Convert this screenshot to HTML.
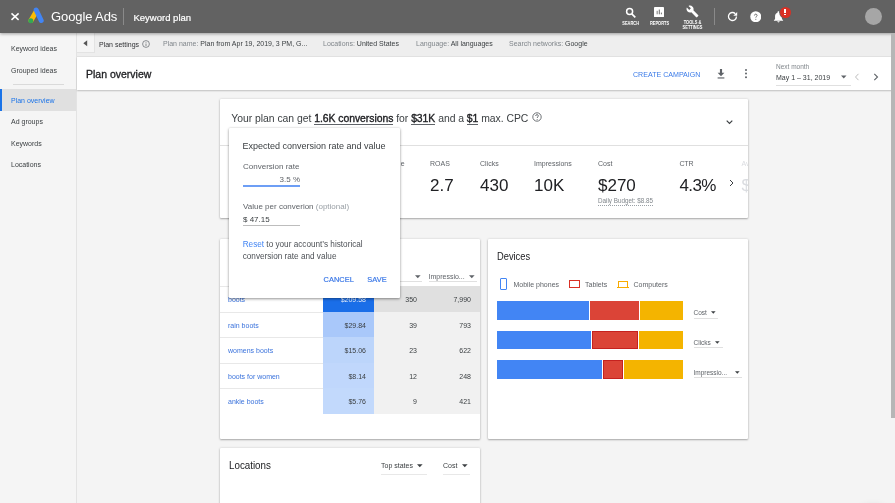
<!DOCTYPE html>
<html><head><meta charset="utf-8">
<style>
*{box-sizing:border-box;margin:0;padding:0}
html,body{width:895px;height:503px;overflow:hidden;background:#f4f4f4;font-family:"Liberation Sans",sans-serif;color:#202124}
.a{position:absolute;white-space:nowrap}
#top{position:absolute;left:0;top:0;width:895px;height:33.3px;background:#626262;box-shadow:0 1px 3px rgba(0,0,0,.35);z-index:5}
#side{position:absolute;left:0;top:33px;width:77px;height:470px;background:#f5f5f5;border-right:1px solid #e3e3e3}
#psbar{position:absolute;left:77px;top:33px;width:818px;height:24px;background:#eeeeee;border-bottom:1px solid #e2e2e2}
#ovh{position:absolute;left:77px;top:57px;width:818px;height:33.2px;background:#fff;box-shadow:0 1px 1.5px rgba(0,0,0,.22)}
.card{position:absolute;background:#fff;box-shadow:0 1px 2px rgba(0,0,0,.28),0 0 2.5px rgba(0,0,0,.14);border-radius:1px}
.lbl{font-size:7px;color:#5f6368}
.val{font-size:17px;color:#202124}
.lnk{color:#3b73dc}
b{font-weight:400;color:#202124;-webkit-text-stroke:.35px #202124;border-bottom:1px solid #5f6368;padding-bottom:.5px}
#root{position:absolute;left:0;top:0;width:895px;height:503px;overflow:hidden;will-change:transform;background:#f4f4f4}
</style></head><body><div id="root">
<div id="top">
  <!-- close X -->
  <svg class="a" style="left:10px;top:12px" width="10" height="10" viewBox="0 0 10 10"><path d="M1.5 1.4L8.6 7.9M8.6 1.4L1.5 7.9" stroke="#fff" stroke-width="1.5"/></svg>
  <!-- logo -->
  <svg class="a" style="left:27px;top:7px" width="18" height="17" viewBox="0 0 18 17">
    <path d="M4 13.5L9.2 4.5" stroke="#fbbc04" stroke-width="5" stroke-linecap="round"/>
    <path d="M9.2 3L14.2 13.5" stroke="#4285f4" stroke-width="5" stroke-linecap="round"/>
    <circle cx="3.8" cy="13.7" r="2.5" fill="#34a853"/>
  </svg>
  <div class="a" style="left:51px;top:9.2px;font-size:13px;color:#fff;line-height:16px;letter-spacing:-.1px">Google Ads</div>
  <div class="a" style="left:123px;top:8px;width:1px;height:17px;background:#8a8a8a"></div>
  <div class="a" style="left:133.5px;top:12.2px;font-size:9.5px;font-weight:400;color:#fff;line-height:11px;-webkit-text-stroke:.2px #fff">Keyword plan</div>
  <!-- search -->
  <svg class="a" style="left:624.5px;top:6.5px" width="12" height="12" viewBox="0 0 12 12"><circle cx="4.6" cy="4.6" r="3" fill="none" stroke="#fff" stroke-width="1.5"/><path d="M6.8 6.8L10.3 10.3" stroke="#fff" stroke-width="1.7"/></svg>
  <div class="a" style="left:621px;top:20.8px;width:19px;text-align:center;font-size:4.6px;font-weight:700;color:#fff;line-height:6px;transform:scaleX(.86)">SEARCH</div>
  <!-- reports -->
  <svg class="a" style="left:654.1px;top:6.5px" width="10" height="10.2" viewBox="0 0 10 10.2"><rect x="0" y="0" width="10" height="10.2" rx=".8" fill="#fff"/><rect x="2.7" y="3.8" width=".85" height="3.5" fill="#626262"/><rect x="4.8" y="2.55" width=".95" height="4.75" fill="#626262"/><rect x="6.9" y="5.6" width=".9" height="1.7" fill="#626262"/></svg>
  <div class="a" style="left:648px;top:20.5px;width:23px;text-align:center;font-size:4.6px;font-weight:700;color:#fff;line-height:6px;transform:scaleX(.86)">REPORTS</div>
  <!-- tools -->
  <svg class="a" style="left:686px;top:5px" width="13" height="13" viewBox="0 0 24 24"><path fill="#fff" d="M22.7 19l-9.1-9.1c.9-2.3.4-5-1.5-6.9-2-2-5-2.4-7.4-1.3L9 6 6 9 1.6 4.7C.4 7.1.9 10.1 2.9 12.1c1.9 1.9 4.6 2.4 6.9 1.5l9.1 9.1c.4.4 1 .4 1.4 0l2.300-2.300c.5-.4.5-1.1.1-1.400z"/></svg>
  <div class="a" style="left:680px;top:19.5px;width:25px;text-align:center;font-size:4.6px;font-weight:700;color:#fff;line-height:5.3px;transform:scaleX(.86)">TOOLS &amp;<br>SETTINGS</div>
  <div class="a" style="left:714px;top:8px;width:1px;height:17px;background:#8a8a8a"></div>
  <!-- refresh -->
  <svg class="a" style="left:725.6px;top:10.4px" width="13" height="13" viewBox="0 0 24 24"><path d="M19.3 12a7.4 7.4 0 1 1-2.170-5.230" fill="none" stroke="#fff" stroke-width="2.500"/><path d="M20.600 3.600v7.200h-7.200z" fill="#fff"/></svg>
  <!-- help -->
  <svg class="a" style="left:749.7px;top:10.6px" width="11.5" height="11.5" viewBox="0 0 24 24"><circle cx="12" cy="12" r="11.5" fill="#fff"/><path d="M9.2 9.400c0-1.600 1.300-2.900 2.800-2.900s2.800 1.200 2.800 2.700c0 2.100-2.700 2.200-2.700 4.600" fill="none" stroke="#626262" stroke-width="1.900"/><circle cx="12.100" cy="17.300" r="1.200" fill="#626262"/></svg>
  <!-- bell -->
  <svg class="a" style="left:773px;top:10.5px" width="11" height="12" viewBox="0 0 24 26"><path fill="#fff" d="M12 25c1.400 0 2.500-1.100 2.500-2.500h-5C9.500 23.900 10.600 25 12 25zm7.500-7.500V11c0-3.600-1.900-6.600-5.300-7.400V2.800C14.200 1.600 13.200.6 12 .6S9.800 1.600 9.800 2.800v.8C6.400 4.400 4.500 7.400 4.500 11v6.500L2 20v1.200h20V20l-2.500-2.500z"/></svg>
  <div class="a" style="left:779.5px;top:6.5px;width:11px;height:11px;border-radius:50%;background:#d93025;box-shadow:0 0 0 .8px #626262"></div>
  <div class="a" style="left:784.4px;top:9px;width:1.3px;height:4.2px;background:#fff"></div>
  <div class="a" style="left:784.4px;top:14.2px;width:1.3px;height:1.3px;background:#fff"></div>
  <!-- avatar -->
  <div class="a" style="left:865px;top:8px;width:17px;height:17px;border-radius:50%;background:#a6a6a6"></div>
</div>

<div id="side">
  <div class="a" style="left:11px;top:12px;font-size:7px;color:#3c4043">Keyword ideas</div>
  <div class="a" style="left:11px;top:33.5px;font-size:7px;color:#3c4043">Grouped ideas</div>
  <div class="a" style="left:13px;top:51px;width:51px;height:1px;background:#dadada"></div>
  <div class="a" style="left:0;top:56px;width:76px;height:21.8px;background:#e0e0e0"></div>
  <div class="a" style="left:0;top:56px;width:2px;height:21.8px;background:#1a73e8"></div>
  <div class="a" style="left:11px;top:64px;font-size:7px;color:#1a73e8">Plan overview</div>
  <div class="a" style="left:11px;top:85px;font-size:7px;color:#3c4043">Ad groups</div>
  <div class="a" style="left:11px;top:106.5px;font-size:7px;color:#3c4043">Keywords</div>
  <div class="a" style="left:11px;top:127.5px;font-size:7px;color:#3c4043">Locations</div>
</div>

<div id="psbar">
  <div class="a" style="left:0;top:0;width:17.5px;height:20px;background:#f5f5f5;border-right:1px solid #e3e3e3;border-bottom:1px solid #e3e3e3"></div>
  <svg class="a" style="left:6px;top:6.5px" width="5" height="7" viewBox="0 0 5 7"><path d="M4.2 .3L.3 3.3L4.2 6.3z" fill="#555"/></svg>
  <div class="a" style="left:22px;top:8px;font-size:7px;color:#303134">Plan settings</div>
  <svg class="a" style="left:65px;top:7.4px" width="8" height="8" viewBox="0 0 8 8"><circle cx="4" cy="4" r="3.4" fill="none" stroke="#5f6368" stroke-width=".7"/><rect x="3.65" y="3.5" width=".7" height="2.5" fill="#5f6368"/><rect x="3.65" y="2.1" width=".7" height=".7" fill="#5f6368"/></svg>
  <div class="a" style="left:86px;top:7px;font-size:7px;color:#80868b">Plan name: <span style="color:#3c4043">Plan from Apr 19, 2019, 3 PM, G...</span></div>
  <div class="a" style="left:246px;top:7px;font-size:7px;color:#80868b">Locations: <span style="color:#3c4043">United States</span></div>
  <div class="a" style="left:339px;top:7px;font-size:7px;color:#80868b">Language: <span style="color:#3c4043">All languages</span></div>
  <div class="a" style="left:432px;top:7px;font-size:7px;color:#80868b">Search networks: <span style="color:#3c4043">Google</span></div>
</div>
<div id="ovh">
  <div class="a" style="left:9px;top:11px;font-size:10.5px;color:#202124;-webkit-text-stroke:.3px #202124">Plan overview</div>
  <div class="a" style="left:556px;top:12.5px;font-size:8px;color:#3b7be8;transform:scaleX(.885);transform-origin:0 0">CREATE CAMPAIGN</div>
  <svg class="a" style="left:639.5px;top:11.6px" width="8" height="10" viewBox="0 0 9 11"><path d="M3.3 0h2.4v4h2.6L4.5 8 .7 4h2.6z" fill="#5f6368"/><rect x=".7" y="9.3" width="7.6" height="1.3" fill="#5f6368"/></svg>
  <div class="a" style="left:668px;top:12px;width:2.2px;height:2.2px;border-radius:50%;background:#5f6368;box-shadow:0 3.6px 0 #5f6368,0 7.2px 0 #5f6368"></div>
  <div class="a" style="left:699px;top:6px;font-size:6.5px;color:#80868b">Next month</div>
  <div class="a" style="left:699px;top:16.5px;font-size:7px;color:#3c4043">May 1 – 31, 2019</div>
  <svg class="a" style="left:764px;top:18px" width="6" height="4" viewBox="0 0 6 4"><path d="M0 .5h5.5L2.75 3.5z" fill="#5f6368"/></svg>
  <div class="a" style="left:699px;top:28px;width:75px;height:1px;background:#e0e0e0"></div>
  <svg class="a" style="left:777px;top:16px" width="6" height="8" viewBox="0 0 6 8"><path d="M4.5 .8L1.5 4l3 3.2" fill="none" stroke="#bdbdbd" stroke-width="1"/></svg>
  <svg class="a" style="left:796px;top:16px" width="6" height="8" viewBox="0 0 6 8"><path d="M1.3 .8L4.5 4l-3.2 3.200" fill="none" stroke="#5f6368" stroke-width="1.100"/></svg>
</div>

<div class="card" style="left:220px;top:99px;width:528px;height:119px;overflow:hidden">
  <div class="a" style="left:11.3px;top:12.8px;font-size:10.4px;color:#3c4043;line-height:14px;letter-spacing:-.03px">Your plan can get <b>1.6K conversions</b> for <b>$31K</b> and a <b>$1</b> max. CPC</div>
  <svg class="a" style="left:312px;top:13px" width="10" height="10" viewBox="0 0 10 10"><circle cx="5" cy="5" r="4.2" fill="none" stroke="#5f6368" stroke-width=".9"/><path d="M3.6 4c0-.8.6-1.400 1.400-1.400s1.400.6 1.400 1.300c0 1-1.300 1-1.300 2.100" fill="none" stroke="#5f6368" stroke-width=".9"/><circle cx="5.100" cy="7.400" r=".5" fill="#5f6368"/></svg>
  <svg class="a" style="left:505.5px;top:21px" width="7" height="4.5" viewBox="0 0 7 4.5"><path d="M.7 .7L3.5 3.5l2.8-2.8" fill="none" stroke="#3c4043" stroke-width="1.2"/></svg>
  <div class="a" style="left:0;top:46px;width:528px;height:1px;background:#e0e0e0"></div>
  <div class="a lbl" style="left:180.8px;top:61px">e</div>
  <div class="a lbl" style="left:210px;top:61px">ROAS</div>
  <div class="a val" style="left:210px;top:76.5px">2.7</div>
  <div class="a lbl" style="left:260px;top:61px">Clicks</div>
  <div class="a val" style="left:260px;top:76.5px">430</div>
  <div class="a lbl" style="left:314px;top:61px">Impressions</div>
  <div class="a val" style="left:314px;top:76.5px">10K</div>
  <div class="a lbl" style="left:378px;top:61px">Cost</div>
  <div class="a val" style="left:378px;top:76.5px">$270</div>
  <div class="a" style="left:378px;top:98px;font-size:6.3px;color:#80868b;line-height:8px;padding-bottom:.5px;background:repeating-linear-gradient(90deg,#9aa0a6 0 1px,transparent 1px 2px) left bottom/100% 1px no-repeat">Daily Budget: $8.85</div>
  <div class="a lbl" style="left:459.5px;top:61px;letter-spacing:-.2px">CTR</div>
  <div class="a val" style="left:459.5px;top:76.5px;letter-spacing:-.6px">4.3%</div>
  <svg class="a" style="left:509px;top:80px" width="5" height="8" viewBox="0 0 5 8"><path d="M1 1l3 3-3 3" fill="none" stroke="#3c4043" stroke-width="1"/></svg>
  <div class="a lbl" style="left:521.5px;top:61px;color:#dadce0">Av</div>
  <div class="a val" style="left:521.5px;top:76.5px;color:#dadce0">$</div>
</div>
<div class="card" style="left:220px;top:239px;width:260px;height:200.3px">
  <div class="a" style="left:12px;top:12px;font-size:9.5px;color:#202124">Ad groups</div>
  <div class="a" style="left:160px;top:34.2px;font-size:7px;color:#5f6368">Clicks</div>
  <svg class="a" style="left:195px;top:36px" width="6" height="4" viewBox="0 0 6 4"><path d="M0 .3h5.6L2.8 3.3z" fill="#5f6368"/></svg>
  <div class="a" style="left:150px;top:42px;width:52px;height:1px;background:#e0e0e0"></div>
  <div class="a" style="left:208.5px;top:34.2px;font-size:7px;color:#5f6368">Impressio...</div>
  <svg class="a" style="left:249px;top:36px" width="6" height="4" viewBox="0 0 6 4"><path d="M0 .3h5.6L2.8 3.3z" fill="#5f6368"/></svg>
  <div class="a" style="left:209px;top:42px;width:48px;height:1px;background:#e0e0e0"></div>
  <div class="a" style="left:0;top:47.2px;width:103px;height:25.5px;border-top:1px solid #e8e8e8"></div>
  <div class="a" style="left:103px;top:47.2px;width:51px;height:25.5px;background:#1a6ee8"></div>
  <div class="a" style="left:154px;top:47.2px;width:106px;height:25.5px;background:#e0e0e0"></div>
  <div class="a lnk" style="left:8px;top:57.0px;font-size:7px;">boots</div>
  <div class="a" style="left:103px;top:57.0px;width:43px;text-align:right;font-size:7px;color:#e8f0fe">$209.58</div>
  <div class="a" style="left:154px;top:57.0px;width:43px;text-align:right;font-size:7px;color:#3c4043">350</div>
  <div class="a" style="left:200px;top:57.0px;width:51px;text-align:right;font-size:7px;color:#3c4043">7,990</div>
  <div class="a" style="left:0;top:72.7px;width:103px;height:25.5px;border-top:1px solid #e8e8e8"></div>
  <div class="a" style="left:103px;top:72.7px;width:51px;height:25.5px;background:#a9c8fa"></div>
  <div class="a" style="left:154px;top:72.7px;width:106px;height:25.5px;background:#f1f1f1"></div>
  <div class="a lnk" style="left:8px;top:82.5px;font-size:7px;">rain boots</div>
  <div class="a" style="left:103px;top:82.5px;width:43px;text-align:right;font-size:7px;color:#3c4043">$29.84</div>
  <div class="a" style="left:154px;top:82.5px;width:43px;text-align:right;font-size:7px;color:#3c4043">39</div>
  <div class="a" style="left:200px;top:82.5px;width:51px;text-align:right;font-size:7px;color:#3c4043">793</div>
  <div class="a" style="left:0;top:98.2px;width:103px;height:25.5px;border-top:1px solid #e8e8e8"></div>
  <div class="a" style="left:103px;top:98.2px;width:51px;height:25.5px;background:#bcd5fb"></div>
  <div class="a" style="left:154px;top:98.2px;width:106px;height:25.5px;background:#f1f1f1"></div>
  <div class="a lnk" style="left:8px;top:108.0px;font-size:7px;">womens boots</div>
  <div class="a" style="left:103px;top:108.0px;width:43px;text-align:right;font-size:7px;color:#3c4043">$15.06</div>
  <div class="a" style="left:154px;top:108.0px;width:43px;text-align:right;font-size:7px;color:#3c4043">23</div>
  <div class="a" style="left:200px;top:108.0px;width:51px;text-align:right;font-size:7px;color:#3c4043">622</div>
  <div class="a" style="left:0;top:123.7px;width:103px;height:25.5px;border-top:1px solid #e8e8e8"></div>
  <div class="a" style="left:103px;top:123.7px;width:51px;height:25.5px;background:#c0d7fc"></div>
  <div class="a" style="left:154px;top:123.7px;width:106px;height:25.5px;background:#f1f1f1"></div>
  <div class="a lnk" style="left:8px;top:133.5px;font-size:7px;">boots for women</div>
  <div class="a" style="left:103px;top:133.5px;width:43px;text-align:right;font-size:7px;color:#3c4043">$8.14</div>
  <div class="a" style="left:154px;top:133.5px;width:43px;text-align:right;font-size:7px;color:#3c4043">12</div>
  <div class="a" style="left:200px;top:133.5px;width:51px;text-align:right;font-size:7px;color:#3c4043">248</div>
  <div class="a" style="left:0;top:149.2px;width:103px;height:25.5px;border-top:1px solid #e8e8e8"></div>
  <div class="a" style="left:103px;top:149.2px;width:51px;height:25.5px;background:#c2d9fc"></div>
  <div class="a" style="left:154px;top:149.2px;width:106px;height:25.5px;background:#f1f1f1"></div>
  <div class="a lnk" style="left:8px;top:159.0px;font-size:7px;">ankle boots</div>
  <div class="a" style="left:103px;top:159.0px;width:43px;text-align:right;font-size:7px;color:#3c4043">$5.76</div>
  <div class="a" style="left:154px;top:159.0px;width:43px;text-align:right;font-size:7px;color:#3c4043">9</div>
  <div class="a" style="left:200px;top:159.0px;width:51px;text-align:right;font-size:7px;color:#3c4043">421</div>
</div>
<div class="card" style="left:488px;top:239px;width:260px;height:200.3px">
  <div class="a" style="left:9px;top:12.4px;font-size:10px;color:#202124;transform:scaleX(.93);transform-origin:0 0">Devices</div>
  <div class="a" style="left:11.7px;top:39.2px;width:7px;height:11.4px;border:1.3px solid #4285f4;border-top-width:1.8px;border-bottom-width:1.8px;border-radius:1px"></div>
  <div class="a" style="left:25.5px;top:42px;font-size:7px;color:#5f6368">Mobile phones</div>
  <div class="a" style="left:81px;top:41px;width:11px;height:8.3px;border:1.4px solid #d93025;border-bottom-width:1.8px"></div>
  <div class="a" style="left:97px;top:42px;font-size:7px;color:#5f6368">Tablets</div>
  <div class="a" style="left:130px;top:41.5px;width:10px;height:7.2px;border:1.2px solid #f9ab00"></div>
  <div class="a" style="left:129px;top:48px;width:12.4px;height:1.4px;background:#f9ab00"></div>
  <div class="a" style="left:145.5px;top:42px;font-size:7px;color:#5f6368">Computers</div>

  <div class="a" style="left:9px;top:62px;width:92px;height:18.5px;background:#4285f4"></div>
  <div class="a" style="left:102px;top:62px;width:48.5px;height:18.5px;background:#db4437"></div>
  <div class="a" style="left:151.5px;top:62px;width:43px;height:18.5px;background:#f4b400"></div>

  <div class="a" style="left:9px;top:91.5px;width:94px;height:18.5px;background:#4285f4"></div>
  <div class="a" style="left:103.5px;top:91.5px;width:46px;height:18.5px;background:#db4437;border:.6px solid #c5221f"></div>
  <div class="a" style="left:150.5px;top:91.5px;width:44px;height:18.5px;background:#f4b400"></div>

  <div class="a" style="left:9px;top:121px;width:105px;height:18.5px;background:#4285f4"></div>
  <div class="a" style="left:114.5px;top:121px;width:20.5px;height:18.5px;background:#db4437;border:.6px solid #c5221f"></div>
  <div class="a" style="left:135.5px;top:121px;width:59px;height:18.5px;background:#f4b400"></div>

  <div class="a" style="left:205.5px;top:70px;font-size:6.5px;color:#5f6368">Cost</div>
  <svg class="a" style="left:222.5px;top:71.5px" width="5" height="4" viewBox="0 0 5 4"><path d="M0 .3h4.6L2.3 2.8z" fill="#3c4043"/></svg>
  <div class="a" style="left:205.5px;top:78.5px;width:24px;height:1px;background:#e0e0e0"></div>
  <div class="a" style="left:205.5px;top:100px;font-size:6.5px;color:#5f6368">Clicks</div>
  <svg class="a" style="left:227px;top:101.5px" width="5" height="4" viewBox="0 0 5 4"><path d="M0 .3h4.6L2.3 2.8z" fill="#3c4043"/></svg>
  <div class="a" style="left:205.5px;top:108px;width:29px;height:1px;background:#e0e0e0"></div>
  <div class="a" style="left:205.5px;top:129.8px;font-size:6.5px;color:#5f6368">Impressio...</div>
  <svg class="a" style="left:247px;top:131.5px" width="5" height="4" viewBox="0 0 5 4"><path d="M0 .3h4.6L2.3 2.8z" fill="#3c4043"/></svg>
  <div class="a" style="left:205.5px;top:137.5px;width:48px;height:1px;background:#e0e0e0"></div>
</div>
<div class="card" style="left:220px;top:448px;width:260px;height:80px">
  <div class="a" style="left:8.5px;top:11.8px;font-size:10.3px;color:#202124;transform:scaleX(.95);transform-origin:0 0">Locations</div>
  <div class="a" style="left:161px;top:13.5px;font-size:7px;color:#3c4043">Top states</div>
  <svg class="a" style="left:197px;top:16px" width="6" height="4" viewBox="0 0 6 4"><path d="M0 .3h5.6L2.8 3.3z" fill="#3c4043"/></svg>
  <div class="a" style="left:161px;top:26px;width:46px;height:1px;background:#e8e8e8"></div>
  <div class="a" style="left:223px;top:13.5px;font-size:7px;color:#3c4043">Cost</div>
  <svg class="a" style="left:242px;top:16px" width="6" height="4" viewBox="0 0 6 4"><path d="M0 .3h5.6L2.8 3.3z" fill="#3c4043"/></svg>
  <div class="a" style="left:223px;top:26px;width:27px;height:1px;background:#e8e8e8"></div>
</div>
<div class="a" style="left:891px;top:33px;width:4px;height:385px;background:#b6b6b6;z-index:6"></div>
<div id="pop" class="card" style="left:229px;top:128px;width:171px;height:170px;box-shadow:0 1px 3px rgba(0,0,0,.4),0 0 2px rgba(0,0,0,.1);z-index:3">
  <div class="a" style="left:13.5px;top:13px;font-size:9px;color:#3c4043">Expected conversion rate and value</div>
  <div class="a" style="left:14px;top:33.5px;font-size:8px;color:#5f6368">Conversion rate</div>
  <div class="a" style="left:14px;top:46.5px;width:57px;text-align:right;font-size:8px;color:#5f6368">3.5 %</div>
  <div class="a" style="left:14px;top:57px;width:57px;height:2px;background:#6d9ef5"></div>
  <div class="a" style="left:14px;top:74px;font-size:8px;color:#5f6368">Value per converion <span style="color:#9aa0a6">(optional)</span></div>
  <div class="a" style="left:14px;top:86.8px;font-size:8px;color:#3c4043">$ 47.15</div>
  <div class="a" style="left:14px;top:97px;width:57px;height:1px;background:#bdbdbd"></div>
  <div class="a" style="left:13.7px;top:111px;font-size:8.2px;color:#4d5156;line-height:11.5px"><span style="color:#4285f4">Reset</span> to your account’s historical<br>conversion rate and value</div>
  <div class="a" style="left:94.6px;top:147px;font-size:7.4px;color:#3b78e7;-webkit-text-stroke:.2px #3b78e7;letter-spacing:.05px">CANCEL</div>
  <div class="a" style="left:138.3px;top:147px;font-size:7.4px;color:#3b78e7;-webkit-text-stroke:.2px #3b78e7;letter-spacing:.05px">SAVE</div>
</div>
<div class="a" style="left:853px;top:506px;width:40px;height:40px;border-radius:50%;background:#f4f4f4;box-shadow:0 0 8px rgba(0,0,0,.12)"></div>
</div></body></html>
